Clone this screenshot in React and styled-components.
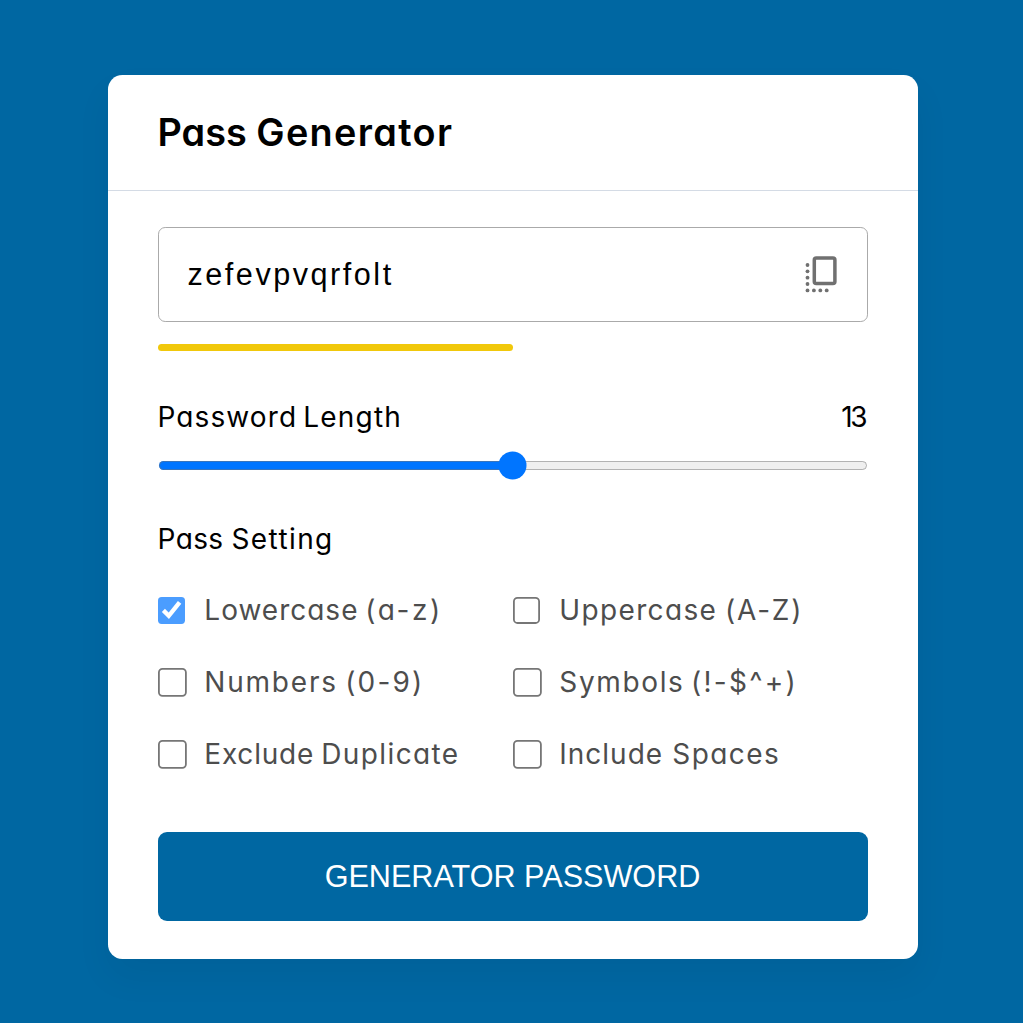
import React, { useState } from "react";
import styled, { createGlobalStyle } from "styled-components";

const GlobalStyle = createGlobalStyle`
  * { box-sizing: border-box; margin: 0; padding: 0; }
  body {
    background: #0067a2;
    font-family: Inter, "Open Sans", sans-serif;
    font-feature-settings: "cv11";
    overflow: hidden;
  }
`;

const Page = styled.main`
  display: flex;
  justify-content: center;
  align-items: flex-start;
  height: 100vh;
  padding: 75px 0 0 2px;
`;

const Card = styled.section`
  width: 810px;
  height: 884px;
  background: #fff;
  border-radius: 14.4px;
  box-shadow: 0 18px 36px rgba(0, 0, 0, 0.05);
`;

const Header = styled.header`
  display: flex;
  align-items: center;
  height: 116px;
  padding: 0 50px;
  border-bottom: 1px solid #d4dbe5;
`;

const Title = styled.h1`
  font-size: 37.8px;
  font-weight: 600;
  line-height: 59px;
`;

const Body = styled.div`
  padding: 36px 50px 38px;
`;

const PasswordBox = styled.div`
  display: flex;
  align-items: center;
  height: 95px;
  padding: 0 29px;
  border: 1px solid #aaa;
  border-radius: 7.2px;
`;

const PasswordInput = styled.input`
  flex: 1;
  min-width: 0;
  border: none;
  outline: none;
  background: none;
  color: #000;
  font: 30.6px "Liberation Sans", Arial, sans-serif;
  letter-spacing: 2.52px;
`;

const CopyIcon = styled.svg`
  flex: none;
  width: 34px;
  height: 40px;
  margin-bottom: 2px;
`;

const Strength = styled.div`
  width: 50%;
  height: 7px;
  margin-top: 22px;
  border-radius: 4px;
  background: #f1c80b;
`;

const LengthRow = styled.div`
  display: flex;
  justify-content: space-between;
  margin-top: 45px;
`;

const Label = styled.span`
  display: block;
  font-size: 28px;
  line-height: 43px;
  white-space: nowrap;
  color: ${(p) => (p.$muted ? "#4d4d4d" : "#000")};
`;

const LengthValue = styled(Label)`
  letter-spacing: -2.5px;
  margin-right: 2.5px;
`;

const Word = styled.span`
  letter-spacing: ${(p) => p.$spacing}px;
  margin-left: ${(p) => p.$offset || 0}px;
`;

const Slider = styled.input`
  display: block;
  zoom: 1.8;
  width: 100%;
  height: 5px;
`;

const SliderRow = styled.div`
  display: flex;
  align-items: center;
  height: 29px;
  margin-top: 12px;
`;

const SettingsTitle = styled.div`
  margin-top: 38px;
`;

const Options = styled.ul`
  display: grid;
  grid-template-columns: 1fr 1fr;
  row-gap: 29px;
  margin-top: 28px;
  list-style: none;
`;

const Option = styled.li`
  display: flex;
  align-items: center;
  height: 43px;
`;

const Checkbox = styled.input`
  zoom: 1.8;
  flex: none;
  width: ${(p) => p.$size}px;
  height: ${(p) => p.$size}px;
  margin: 0 ${(p) => 26 - p.$size}px 0 0;
  opacity: ${(p) => (p.$locked ? 0.7 : 1)};
`;

const GenerateButton = styled.button`
  display: block;
  width: 100%;
  height: 89px;
  margin-top: 56px;
  border: none;
  border-radius: 9px;
  background: #0067a2;
  color: #fff;
  font: 30.6px "Liberation Sans", Arial, sans-serif;
  text-transform: uppercase;
`;

// Each word carries its own tracking and an optional nudge from the previous word.
const titleWords = [["Pass", 0], ["Generator", 1.35]];
const lengthWords = [["Password", 1.1], ["Length", 1.2, -1.8]];
const settingWords = [["Pass", 0.4], ["Setting", 1.4]];

const options = [
  { words: [["Lowercase", 1], ["(a-z)", 2.6, -1]], checked: true, size: 16 },
  { words: [["Uppercase", 1.35], ["(A-Z)", 1.75]], size: 16 },
  { words: [["Numbers", 1.8], ["(0-9)", 2.2, -0.6]], size: 17 },
  { words: [["Symbols", 1.65], ["(!-$^+)", 2.3, -1.5]], size: 17 },
  { words: [["Exclude", 0.8], ["Duplicate", 1.4, -0.9]], size: 17 },
  { words: [["Include", 1], ["Spaces", 1.4, 1.3]], size: 17 },
];

const dots = [
  [3.5, 11], [3.5, 17.3], [3.5, 23.7], [3.5, 30], [3.5, 36.4],
  [9.9, 36.4], [16.3, 36.4], [22.7, 36.4],
];

function Words({ items }) {
  return items.map(([text, spacing, offset], i) => (
    <React.Fragment key={text}>
      {i > 0 && " "}
      <Word $spacing={spacing} $offset={offset}>{text}</Word>
    </React.Fragment>
  ));
}

export default function App() {
  const [length, setLength] = useState(13);
  return (
    <>
      <GlobalStyle />
      <Page>
        <Card>
          <Header>
            <Title><Words items={titleWords} /></Title>
          </Header>
          <Body>
            <PasswordBox>
              <PasswordInput readOnly value="zefevpvqrfolt" />
              <CopyIcon viewBox="0 0 34 40" fill="#707070">
                <rect x="10.3" y="4" width="20.6" height="25.6" rx="2" fill="none" stroke="#707070" strokeWidth="3.5" />
                {dots.map(([x, y]) => (
                  <circle key={`${x}-${y}`} cx={x} cy={y} r="1.9" />
                ))}
              </CopyIcon>
            </PasswordBox>
            <Strength />
            <LengthRow>
              <Label><Words items={lengthWords} /></Label>
              <LengthValue>{length}</LengthValue>
            </LengthRow>
            <SliderRow>
              <Slider type="range" min="1" max="25" value={length} onChange={(e) => setLength(+e.target.value)} />
            </SliderRow>
            <SettingsTitle>
              <Label><Words items={settingWords} /></Label>
            </SettingsTitle>
            <Options>
              {options.map((o) => (
                <Option key={o.words[0][0]}>
                  <Checkbox type="checkbox" defaultChecked={o.checked} $locked={o.checked} $size={o.size} />
                  <Label $muted><Words items={o.words} /></Label>
                </Option>
              ))}
            </Options>
            <GenerateButton>Generator Password</GenerateButton>
          </Body>
        </Card>
      </Page>
    </>
  );
}
